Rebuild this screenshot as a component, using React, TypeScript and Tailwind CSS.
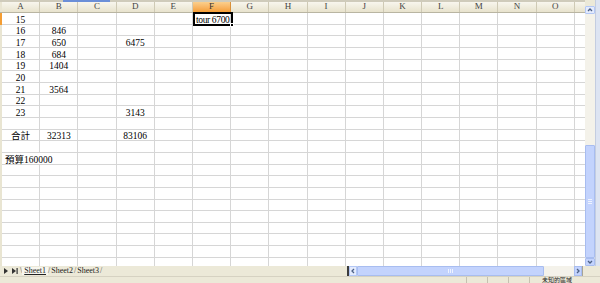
import React from "react";

const COLS = ["A", "B", "C", "D", "E", "F", "G", "H", "I", "J", "K", "L", "M", "N", "O", "P"];

type RowData = { [col: string]: string };

const ROWS: RowData[] = [
  { A: "15", F: "tour 6700" },
  { A: "16", B: "846" },
  { A: "17", B: "650", D: "6475" },
  { A: "18", B: "684" },
  { A: "19", B: "1404" },
  { A: "20" },
  { A: "21", B: "3564" },
  { A: "22" },
  { A: "23", D: "3143" },
  {},
  { A: "合計", B: "32313", D: "83106" },
  {},
  { A: "預算160000" },
  {},
  {},
  {},
  {},
  {},
  {},
  {},
  {},
  {},
];

function Chevron({ dir }: { dir: "up" | "down" | "left" | "right" }) {
  const d = {
    up: "M1 4 L3 2 L5 4",
    down: "M1 2 L3 4 L5 2",
    left: "M4 1 L2 3 L4 5",
    right: "M2 1 L4 3 L2 5",
  }[dir];
  return (
    <svg width="6" height="6" viewBox="0 0 6 6">
      <path d={d} fill="none" stroke="#4d6185" strokeWidth="1.3" />
    </svg>
  );
}

function HeaderRow() {
  return (
    <div className="flex h-[11px] shrink-0 border-b border-[#b9b5a2]">
      <div className="w-[2px] shrink-0 bg-[#e9e5d2]" />
      {COLS.map((c) => (
        <div
          key={c}
          className={
            c === "F"
              ? "w-[38.2px] shrink-0 flex items-center justify-center text-[9px] text-[#333] bg-linear-to-b from-[#fbcf8c] to-[#f49d33] border-r border-[#d9903a]"
              : "w-[38.2px] shrink-0 flex items-center justify-center text-[9px] text-[#444] bg-linear-to-b from-[#f8f6ee] to-[#e8e3cd] border-r border-[#cfcab5]"
          }
        >
          {c === "P" ? "" : c}
        </div>
      ))}
    </div>
  );
}

function GridRow({ data, index }: { data: RowData; index: number }) {
  return (
    <div className="flex h-[11.67px] shrink-0">
      <div className={index === 0 ? "w-[2px] shrink-0 bg-[#f49d33]" : "w-[2px] shrink-0 bg-[#e9e5d2]"} />
      {COLS.map((c) => {
        const v = data[c];
        const overflow = v === "預算160000";
        const left = c === "F" || overflow;
        return (
          <div
            key={c}
            className={
              "w-[38.2px] shrink-0 flex items-end whitespace-nowrap text-[9.5px] leading-[7px] text-black border-b border-[#d6d6d6] " +
              (overflow ? "overflow-visible " : "border-r ") +
              (c === "F" ? "tracking-[-0.35px] " : "") +
              (left ? "justify-start pl-[3px]" : "justify-center")
            }
          >
            {v}
          </div>
        );
      })}
    </div>
  );
}

function VScroll() {
  return (
    <div className="w-[10px] shrink-0 flex flex-col bg-[#f4f2ea]">
      <div className="h-[6px] shrink-0 bg-[#ece9d8]" />
      <div className="h-[8px] shrink-0 flex items-center justify-center bg-[#e4ebfd] border border-[#b4c8f6] rounded-[1px]">
        <Chevron dir="up" />
      </div>
      <div className="h-[131px] shrink-0" />
      <div className="flex-1 flex items-center justify-center bg-[#c3d3fd] border border-[#a8bdf0] rounded-[1px]">
        <div className="flex flex-col gap-[1px]">
          <div className="w-[4px] h-px bg-[#eef3ff]" />
          <div className="w-[4px] h-px bg-[#eef3ff]" />
          <div className="w-[4px] h-px bg-[#eef3ff]" />
        </div>
      </div>
      <div className="h-[8px] shrink-0 flex items-center justify-center bg-[#c3d3fd] border border-[#a8bdf0] rounded-[1px]">
        <Chevron dir="down" />
      </div>
    </div>
  );
}

function TabBar() {
  return (
    <div className="flex h-[11px] shrink-0 items-center bg-[#ece9d8] text-[8px] leading-none text-[#222] border-b border-[#d6d2c2]">
      <div className="flex w-[20px] shrink-0 items-center gap-[4px] pl-[4px]">
        <svg width="4" height="6" viewBox="0 0 4 6">
          <path d="M0 0 L4 3 L0 6 Z" fill="#333" />
        </svg>
        <svg width="6" height="6" viewBox="0 0 6 6">
          <path d="M0 0 L4 3 L0 6 Z" fill="#333" />
          <rect x="4.5" y="0" width="1.2" height="6" fill="#333" />
        </svg>
      </div>
      <div className="flex items-center w-[327px] shrink-0">
        <span className="text-[#555]">\</span>
        <span className="underline bg-[#f7f6ef] px-[2px]">Sheet1</span>
        <span className="text-[#555]">/</span>
        <span className="px-[1px]">Sheet2</span>
        <span className="text-[#555]">/</span>
        <span className="px-[1px]">Sheet3</span>
        <span className="text-[#555]">/</span>
      </div>
      <div className="w-[2px] h-full shrink-0 bg-[#3c3c3c]" />
      <div className="w-[8px] h-full shrink-0 flex items-center justify-center bg-[#e4ebfd] border border-[#b4c8f6]">
        <Chevron dir="left" />
      </div>
      <div className="w-[187px] h-full shrink-0 flex items-center justify-center bg-[#c3d3fd] border border-[#a8bdf0] rounded-[1px]">
        <div className="flex gap-[1px]">
          <div className="w-px h-[4px] bg-[#eef3ff]" />
          <div className="w-px h-[4px] bg-[#eef3ff]" />
          <div className="w-px h-[4px] bg-[#eef3ff]" />
        </div>
      </div>
      <div className="w-[30px] h-full shrink-0 bg-[#f4f2ea]" />
      <div className="w-[8px] h-full shrink-0 flex items-center justify-center bg-[#c3d3fd] border border-[#a8bdf0]">
        <Chevron dir="right" />
      </div>
      <div className="flex-1 h-full bg-[#ece9d8] border-l border-[#a8a595]" />
    </div>
  );
}

function StatusBar() {
  return (
    <div className="flex h-[6px] shrink-0 items-center bg-[#ece9d8] text-[6px] leading-[6px] text-[#222]">
      <div className="flex-1" />
      <div className="w-px h-full bg-[#c5c1b0] mr-[20px]" />
      <div className="w-px h-full bg-[#c5c1b0] mr-[20px]" />
      <div className="w-px h-full bg-[#c5c1b0] mr-[20px]" />
      <div className="w-px h-full bg-[#c5c1b0] mr-[12px]" />
      <div className="w-[58px]">未知的區域</div>
    </div>
  );
}

export default function App() {
  return (
    <div className="w-[600px] h-[283px] overflow-hidden flex flex-col bg-white font-['Liberation_Serif','Noto_Sans_CJK_TC',serif]">
      <div className="flex flex-1 min-h-0">
        <div className="relative w-[585px] shrink-0 flex flex-col overflow-hidden">
          <div className="flex h-[2px] shrink-0 bg-[#cfcbbb]">
            <div className="w-[63px]" />
            <div className="w-[47px] bg-[#6b8fd8]" />
          </div>
          <HeaderRow />
          {ROWS.map((r, i) => (
            <GridRow key={i} data={r} index={i} />
          ))}
          <div className="absolute left-[193px] top-[12px] w-[40px] h-[13.67px] border-2 border-black pointer-events-none" />
          <div className="absolute left-[230px] top-[23px] w-[4px] h-[4px] bg-black border border-white" />
        </div>
        <VScroll />
        <div className="flex-1 bg-[#dde4f2] border-l border-[#c4cde0]" />
      </div>
      <TabBar />
      <StatusBar />
    </div>
  );
}
